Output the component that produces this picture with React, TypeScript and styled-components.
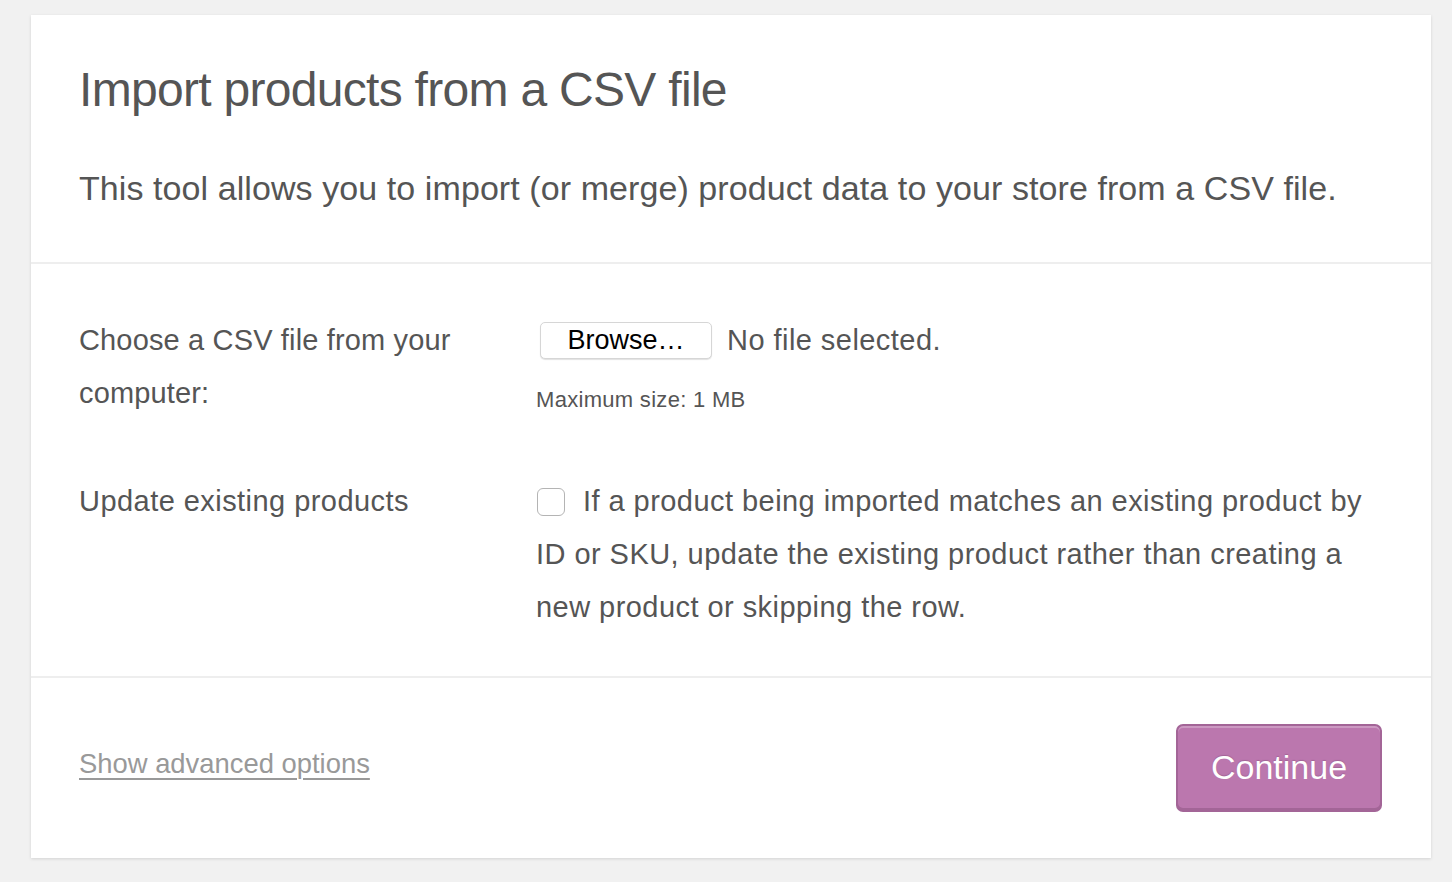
import React from "react";
import styled, { createGlobalStyle } from "styled-components";

const GlobalStyle = createGlobalStyle`
  html, body {
    margin: 0;
    padding: 0;
    background: #f1f1f1;
  }
  body {
    font-family: "Liberation Sans", Arial, sans-serif;
    color: #555;
  }
`;

const Page = styled.div`
  padding: 15px 21px 24px 31px;
`;

const Card = styled.div`
  width: 1400px;
  height: 843px;
  background: #fff;
  box-shadow: 0 1px 3px rgba(0, 0, 0, 0.13);
  display: flex;
  flex-direction: column;
  box-sizing: border-box;
`;

const Header = styled.header`
  padding: 47px 48px 54px;
  border-bottom: 2px solid #eeeeee;
`;

const Title = styled.h2`
  margin: 0 0 50px;
  font-size: 48px;
  line-height: 56px;
  font-weight: 400;
  letter-spacing: -0.7px;
  color: #555;
`;

const Lead = styled.p`
  margin: 0;
  font-size: 34px;
  line-height: 40px;
  letter-spacing: 0.08px;
  color: #555;
`;

const Body = styled.section`
  padding: 50px 48px 42px;
  border-bottom: 2px solid #eeeeee;
  display: flex;
  flex-direction: column;
  gap: 49px;
`;

const Row = styled.div`
  display: grid;
  grid-template-columns: 457px 1fr;
  font-size: 29px;
  line-height: 53px;
  letter-spacing: 0.45px;
  color: #555;
`;

const Label = styled.label<{ $tight?: boolean }>`
  display: block;
  padding-right: 40px;
  letter-spacing: ${(p) => (p.$tight ? "0.15px" : "0.45px")};
`;

const Field = styled.div`
  display: flex;
  flex-direction: column;
`;

const FileLine = styled.div`
  display: flex;
  align-items: center;
  height: 53px;
`;

const BrowseButton = styled.button`
  margin-left: 4px;
  width: 172px;
  height: 37px;
  box-sizing: border-box;
  border: 1px solid #d6d6d6;
  border-radius: 5px;
  background: #fff;
  box-shadow: 0 1px 1px rgba(0, 0, 0, 0.12);
  font-family: "Liberation Sans", Arial, sans-serif;
  font-size: 27px;
  line-height: 1;
  color: #000;
  padding: 0;
`;

const FileStatus = styled.span`
  margin-left: 15px;
`;

const Hint = styled.div`
  font-size: 22px;
  line-height: 53px;
  letter-spacing: 0.3px;
  padding-top: 6px;
  color: #555;
`;

const CheckText = styled.div`
  margin: 0;
`;

const Checkbox = styled.span`
  display: inline-block;
  width: 28px;
  height: 28px;
  box-sizing: border-box;
  border: 1px solid #b4b4b4;
  border-radius: 6px;
  background: #fff;
  vertical-align: -5px;
  margin: 0 18px 0 1px;
`;

const Footer = styled.footer`
  flex: 1;
  display: flex;
  align-items: center;
  justify-content: space-between;
  padding: 0 49px 2px 48px;
`;

const AdvancedLink = styled.a`
  font-size: 27.4px;
  color: #999;
  text-decoration: underline;
  text-decoration-thickness: 2px;
  text-underline-offset: 5px;
  margin-top: -6px;
`;

const ContinueButton = styled.button`
  width: 206px;
  height: 86px;
  box-sizing: border-box;
  background: #bb77ae;
  border: 2px solid #a36597;
  border-radius: 7px;
  box-shadow: inset 0 2px 0 #cc99c2, 0 2px 0 #a36597;
  color: #fff;
  font-family: "Liberation Sans", Arial, sans-serif;
  font-size: 34px;
  text-shadow: 0 -1px 1px #a36597;
  padding: 0;
`;

export default function App() {
  return (
    <>
      <GlobalStyle />
      <Page>
        <Card>
          <Header>
            <Title>Import products from a CSV file</Title>
            <Lead>
              This tool allows you to import (or merge) product data to your store from a CSV file.
            </Lead>
          </Header>
          <Body>
            <Row>
              <Label $tight>Choose a CSV file from your computer:</Label>
              <Field>
                <FileLine>
                  <BrowseButton type="button">Browse…</BrowseButton>
                  <FileStatus>No file selected.</FileStatus>
                </FileLine>
                <Hint>Maximum size: 1 MB</Hint>
              </Field>
            </Row>
            <Row>
              <Label>Update existing products</Label>
              <Field>
                <CheckText>
                  <Checkbox />
                  If a product being imported matches an existing product by ID or SKU, update
                  the existing product rather than creating a new product or skipping the row.
                </CheckText>
              </Field>
            </Row>
          </Body>
          <Footer>
            <AdvancedLink href="#">Show advanced options</AdvancedLink>
            <ContinueButton type="button">Continue</ContinueButton>
          </Footer>
        </Card>
      </Page>
    </>
  );
}
